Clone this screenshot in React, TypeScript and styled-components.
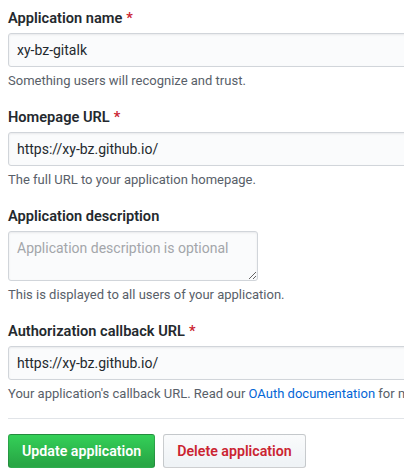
import React from "react";
import styled, { createGlobalStyle } from "styled-components";

const GlobalStyle = createGlobalStyle`
  html, body {
    margin: 0;
    padding: 0;
    background: #fff;
    overflow: hidden;
  }
  body {
    font-family: Roboto, "Liberation Sans", Arial, sans-serif;
    color: #24292e;
  }
`;

const Page = styled.div`
  width: 460px;
  padding: 8px;
`;

const Form = styled.form`
  display: flex;
  flex-direction: column;
  gap: 17px;
`;

const Group = styled.div`
  display: flex;
  flex-direction: column;
  align-items: flex-start;
`;

const Label = styled.label`
  font-size: 14.6px;
  line-height: 20px;
  font-weight: 600;
  margin-bottom: 5px;
`;

const Required = styled.span`
  color: #cb2431;
  margin-left: 4px;
`;

const TextInput = styled.input`
  box-sizing: border-box;
  width: 440px;
  height: 34px;
  padding: 6px 8px;
  font: inherit;
  font-size: 14px;
  line-height: 20px;
  color: #24292e;
  background: #fafbfc;
  border: 1px solid #d1d5da;
  border-radius: 3px;
  box-shadow: inset 0 1px 2px rgba(27, 31, 35, 0.075);
  outline: none;
`;

const TextArea = styled.textarea`
  box-sizing: border-box;
  width: 250px;
  height: 50px;
  padding: 6px 8px;
  font: inherit;
  font-size: 14px;
  line-height: 20px;
  color: #24292e;
  background: #fafbfc;
  border: 1px solid #d1d5da;
  border-radius: 3px;
  box-shadow: inset 0 1px 2px rgba(27, 31, 35, 0.075);
  outline: none;
  resize: both;

  &::placeholder {
    color: #a3a6aa;
  }
`;

const Note = styled.p`
  margin: 5px 0 0;
  font-size: 13px;
  line-height: 18px;
  color: #586069;
  white-space: nowrap;
`;

const Link = styled.a`
  color: #0366d6;
  text-decoration: none;
`;

const Divider = styled.hr`
  width: 100%;
  height: 0;
  margin: -2px 0 -2px;
  border: 0;
  border-top: 1px solid #e1e4e8;
`;

const Actions = styled.div`
  display: flex;
  gap: 8px;
`;

const Button = styled.button<{ $variant: "primary" | "danger" }>`
  height: 34px;
  padding: 6px 13px;
  font: inherit;
  font-size: 14.2px;
  line-height: 20px;
  font-weight: 600;
  border-radius: 3px;
  border: 1px solid rgba(27, 31, 35, 0.2);
  cursor: pointer;
  color: ${(p) => (p.$variant === "primary" ? "#fff" : "#cb2431")};
  background: ${(p) =>
    p.$variant === "primary"
      ? "linear-gradient(-180deg, #34d058 0%, #28a745 90%)"
      : "linear-gradient(-180deg, #fafbfc 0%, #eff3f6 90%)"};
`;

export default function App() {
  return (
    <Page>
      <GlobalStyle />
      <Form onSubmit={(e) => e.preventDefault()}>
        <Group>
          <Label>
            Application name<Required>*</Required>
          </Label>
          <TextInput defaultValue="xy-bz-gitalk" />
          <Note>Something users will recognize and trust.</Note>
        </Group>
        <Group>
          <Label>
            Homepage URL<Required>*</Required>
          </Label>
          <TextInput defaultValue="https://xy-bz.github.io/" />
          <Note>The full URL to your application homepage.</Note>
        </Group>
        <Group>
          <Label>Application description</Label>
          <TextArea placeholder="Application description is optional" />
          <Note>This is displayed to all users of your application.</Note>
        </Group>
        <Group>
          <Label>
            Authorization callback URL<Required>*</Required>
          </Label>
          <TextInput defaultValue="https://xy-bz.github.io/" />
          <Note>
            Your application's callback URL. Read our{" "}
            <Link href="#">OAuth documentation</Link> for more information.
          </Note>
        </Group>
        <Divider />
        <Actions>
          <Button $variant="primary">Update application</Button>
          <Button $variant="danger">Delete application</Button>
        </Actions>
      </Form>
    </Page>
  );
}
